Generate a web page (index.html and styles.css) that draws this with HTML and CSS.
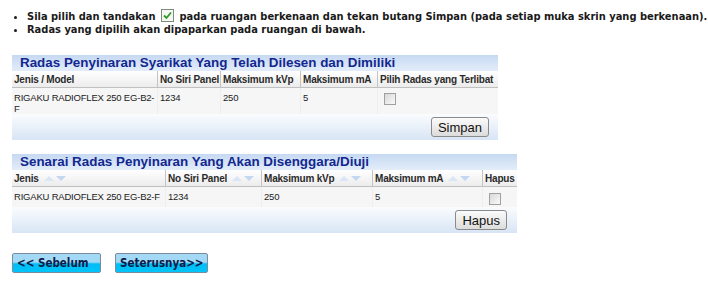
FILE: index.html
```
<!DOCTYPE html>
<html>
<head>
<meta charset="utf-8">
<link rel="stylesheet" href="styles.css">
</head>
<body>
<ul class="notes">
  <li>Sila pilih dan tandakan <span class="tick"><svg width="13" height="13" viewBox="0 0 13 13"><rect x="0.5" y="0.5" width="12" height="12" fill="#f4f7f2" stroke="#7d8c7a"/><path d="M3 6.5 L5.5 9 L10 3.5" fill="none" stroke="#2f9a2a" stroke-width="1.8"/></svg></span> pada ruangan berkenaan dan tekan butang Simpan (pada setiap muka skrin yang berkenaan).</li>
  <li>Radas yang dipilih akan dipaparkan pada ruangan di bawah.</li>
</ul>

<div class="panel panel-one">
  <div class="panel-title">Radas Penyinaran Syarikat Yang Telah Dilesen dan Dimiliki</div>
  <table class="grid">
    <colgroup><col class="c1a"><col class="c2a"><col class="c3a"><col class="c4a"><col class="c5a"></colgroup>
    <thead>
      <tr><th>Jenis / Model</th><th>No Siri Panel</th><th>Maksimum kVp</th><th>Maksimum mA</th><th>Pilih Radas yang Terlibat</th></tr>
    </thead>
    <tbody>
      <tr><td>RIGAKU RADIOFLEX 250 EG-B2-F</td><td>1234</td><td>250</td><td>5</td><td class="chk"><span class="box"></span></td></tr>
    </tbody>
  </table>
  <div class="panel-foot"><button class="btn">Simpan</button></div>
</div>

<div class="panel panel-two">
  <div class="panel-title">Senarai Radas Penyinaran Yang Akan Disenggara/Diuji</div>
  <table class="grid">
    <colgroup><col class="c1b"><col class="c2b"><col class="c3b"><col class="c4b"><col class="c5b"></colgroup>
    <thead>
      <tr><th><span class="lbl">Jenis</span><span class="sort"></span></th><th><span class="lbl">No Siri Panel</span><span class="sort"></span></th><th><span class="lbl">Maksimum kVp</span><span class="sort"></span></th><th><span class="lbl">Maksimum mA</span><span class="sort"></span></th><th class="nosort">Hapus</th></tr>
    </thead>
    <tbody>
      <tr><td>RIGAKU RADIOFLEX 250 EG-B2-F</td><td>1234</td><td>250</td><td>5</td><td class="chk"><span class="box"></span></td></tr>
    </tbody>
  </table>
  <div class="panel-foot"><button class="btn">Hapus</button></div>
</div>

<div class="nav">
  <button class="navbtn prev">&lt;&lt; Sebelum</button>
  <button class="navbtn next">Seterusnya&gt;&gt;</button>
</div>
</body>
</html>
```
FILE: styles.css
```
html, body { margin: 0; padding: 0; background: #fff; }
body { padding: 9px 12px 0 12px; font-family: "Liberation Sans", Arial, sans-serif; }

.notes {
  margin: 0;
  padding: 0 0 0 15px;
  font-family: "DejaVu Sans Condensed", "DejaVu Sans", sans-serif;
  font-weight: bold;
  font-size: 11px;
  line-height: 13px;
  color: #1a1a1a;
  white-space: nowrap;
}
.notes li { list-style: disc; }
.tick { display: inline-block; vertical-align: -2px; margin: 0 2px; }
.tick svg { display: block; }

.panel-one { width: 486px; margin-top: 19px; }
.panel-two { width: 505px; margin-top: 14px; }

.panel-title {
  height: 16px;
  line-height: 16px;
  padding-left: 8px;
  background: linear-gradient(to bottom, #c6d9f2, #e3edf9);
  color: #12278f;
  font-family: "Liberation Sans", Arial, sans-serif;
  font-weight: bold;
  font-size: 13.4px;
  white-space: nowrap;
  overflow: hidden;
}

.grid {
  width: 100%;
  border-collapse: separate;
  border-spacing: 0;
  table-layout: fixed;
  font-family: "Liberation Sans", Arial, sans-serif;
  font-size: 9.5px;
  letter-spacing: -0.2px;
  color: #222;
}
.grid th {
  height: 16px;
  padding: 0 2px;
  text-align: left;
  font-weight: bold;
  font-size: 10px;
  color: #2a2a2a;
  background: linear-gradient(to bottom, #ffffff, #ececec);
  border-left: 1px solid #c4c4c4;
  border-bottom: 1px solid #c0c0c0;
  white-space: nowrap;
  overflow: hidden;
  box-sizing: border-box;
}
.grid th:first-child { border-left: none; }
.grid td {
  padding: 4px 1px 0 2px;
  vertical-align: top;
  background: #f6f6f6;
  border-left: 1px solid #eeeeee;
  line-height: 11px;
  box-sizing: border-box;
}
.grid td:first-child { border-left: none; }
.grid th { height: 17px; }
.panel-one .grid td { height: 26px; }
.panel-two .grid td { height: 20px; }

.c1a { width: 145px; } .c2a { width: 63px; } .c3a { width: 80px; } .c4a { width: 77px; } .c5a { width: 121px; }
.c1b { width: 153px; } .c2b { width: 96px; } .c3b { width: 111px; } .c4b { width: 110px; } .c5b { width: 35px; }

.lbl { display: inline-block; vertical-align: middle; }
.sort {
  display: inline-block;
  vertical-align: middle;
  position: relative;
  width: 22px;
  height: 5px;
  margin-left: 5px;
}
.sort::before, .sort::after {
  content: "";
  position: absolute;
  top: 0;
  width: 0; height: 0;
  border-left: 5px solid transparent;
  border-right: 5px solid transparent;
}
.sort::before { left: 0; border-bottom: 5px solid #d9e6f6; }
.sort::after { left: 12px; border-top: 5px solid #c4d7f0; }

.chk { padding-left: 6px !important; }
.box {
  display: inline-block;
  width: 10px; height: 10px;
  margin-top: 1px;
  border: 1px solid #a0a0a0;
  background: linear-gradient(to bottom right, #d8d8d8, #fafafa);
}
.panel-two .chk .box { margin-top: 2px; }

.panel-foot {
  height: 26px;
  display: flex;
  justify-content: flex-end;
  align-items: center;
  padding-right: 9px;
  background: linear-gradient(to bottom, #fafcfe, #d8e5f5);
}
.panel-two .panel-foot { padding-right: 10px; }
.btn {
  height: 20px;
  padding: 0 6px;
  font-family: "Liberation Sans", Arial, sans-serif;
  font-size: 13px;
  color: #111;
  border: 1px solid #8a8a8a;
  border-radius: 3px;
  background: linear-gradient(to bottom, #fbfbfb, #dcdcdc);
}

.nav { display: flex; gap: 14px; margin-top: 20px; }
.navbtn {
  height: 20px;
  padding: 0 4px;
  font-family: "DejaVu Sans Condensed", "DejaVu Sans", sans-serif;
  font-weight: bold;
  font-size: 11.5px;
  color: #0d1b4a;
  border: 1px solid #7c8ca0;
  border-radius: 2px;
  background: linear-gradient(to bottom, #a3d9f4 0%, #a3d9f4 45%, #00bdf4 55%, #00c5fa 100%);
  text-align: left;
}
.prev { width: 89px; }
.next { width: 93px; }
```
